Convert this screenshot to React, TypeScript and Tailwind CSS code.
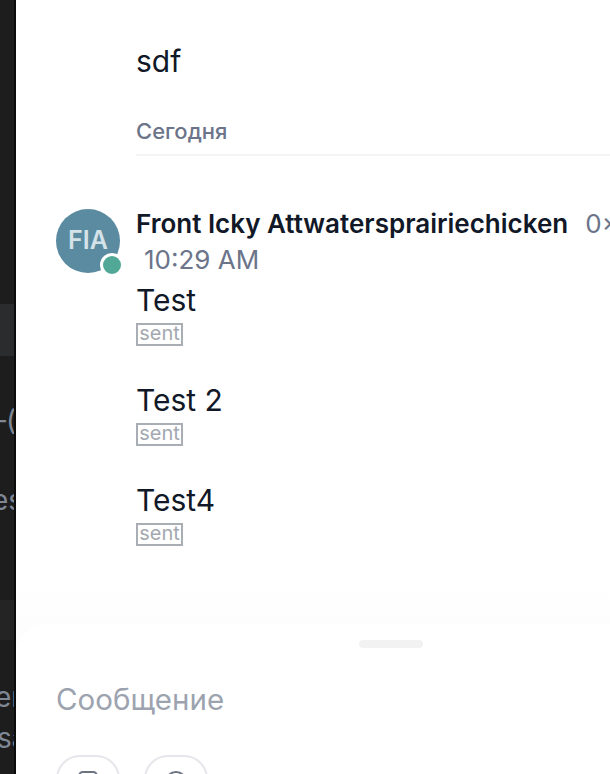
const MESSAGES = ['Test', 'Test 2', 'Test4'];

function Sidebar() {
  return (
    <aside className="flex h-full w-4 shrink-0 flex-col overflow-hidden border-r-2 border-[#0c0c0c] bg-[#1d1d1e] text-[28px] leading-[40px] whitespace-nowrap text-[#7f8794]">
      <div className="mt-[304px] h-[52px] shrink-0 bg-[#2b2c2e]" />
      <div className="mt-[44px] ml-[-8px] h-[40px] shrink-0">–(</div>
      <div className="mt-[40px] ml-[-8px] h-[40px] shrink-0">es</div>
      <div className="mt-[80px] h-[40px] shrink-0 bg-[#242425]" />
      <div className="mt-[37px] ml-[-5px] h-[40px] shrink-0">er</div>
      <div className="mt-[1px] ml-[-3px] h-[40px] shrink-0">sa</div>
    </aside>
  );
}

function Avatar() {
  return (
    <div className="relative flex size-16 shrink-0 items-center justify-center rounded-full bg-[#5a8ba1] text-[25px] font-semibold text-[#d5e2e8]">
      FIA
      <span className="absolute right-[-4px] bottom-[-4px] size-6 rounded-full border-[3px] border-white bg-[#52a896]" />
    </div>
  );
}

function Message({ text }: { text: string }) {
  return (
    <div className="mb-[38px] h-[62px]">
      <p className="text-[30px] leading-[40px] text-[#111827]">{text}</p>
      <span className="mt-[3px] block h-[23px] w-[47px] border-2 border-[#a9aeb5] text-center text-[20px] leading-[17px] text-[#a3a8b0]">
        sent
      </span>
    </div>
  );
}

function Composer() {
  return (
    <div className="shrink-0 bg-gradient-to-b from-white to-[#f8f8f8] pt-[50px]">
      <div className="h-[150px] overflow-hidden rounded-tl-[32px] bg-white pt-4">
        <div className="ml-[343px] h-2 w-16 rounded-full bg-[#f2f2f2]" />
        <p className="mt-[31px] ml-10 text-[29.5px] leading-[40px] text-[#9ca3af]">Сообщение</p>
        <div className="mt-[36px] ml-10 flex gap-6">
          <button className="flex h-16 w-16 justify-center rounded-3xl border-2 border-[#e5e7eb] pt-[13px]">
            <svg width="24" height="24" viewBox="0 0 24 24" fill="none" stroke="#6b7280" strokeWidth="2">
              <rect x="3" y="2" width="18" height="20" rx="4" />
            </svg>
          </button>
          <button className="flex h-16 w-16 justify-center rounded-3xl border-2 border-[#e5e7eb] pt-[13px]">
            <svg width="24" height="24" viewBox="0 0 24 24" fill="none" stroke="#6b7280" strokeWidth="2">
              <circle cx="12" cy="12" r="10" />
            </svg>
          </button>
        </div>
      </div>
    </div>
  );
}

export default function App() {
  return (
    <div className="flex h-[774px] w-[610px] overflow-hidden bg-white font-['Inter',sans-serif]">
      <Sidebar />
      <main className="flex min-w-0 flex-1 flex-col">
        <div className="h-[574px] shrink-0 overflow-hidden pl-10">
          <div className="ml-20 pt-[41px]">
            <p className="text-[30px] leading-[40px] text-[#111827]">sdf</p>
            <div className="mt-[36px] border-b-2 border-[#f3f4f6] pb-[9px] text-[22px] leading-[28px] font-medium text-[#6b7489]">
              Сегодня
            </div>
          </div>
          <div className="mt-[53px] flex gap-4">
            <Avatar />
            <div className="min-w-0 flex-1">
              <div className="mt-[-1px] whitespace-nowrap text-[26px] leading-[32px]">
                <span className="font-semibold text-[#111827]">Front Icky Attwatersprairiechicken</span>
                <span className="ml-[17px] text-[#6b7489]">0×</span>
              </div>
              <p className="mt-[4px] pl-2 text-[26px] leading-[32px] text-[#6b7489]">10:29 AM</p>
              <div className="mt-[4px]">
                {MESSAGES.map((m) => (
                  <Message key={m} text={m} />
                ))}
              </div>
            </div>
          </div>
        </div>
        <Composer />
      </main>
    </div>
  );
}
